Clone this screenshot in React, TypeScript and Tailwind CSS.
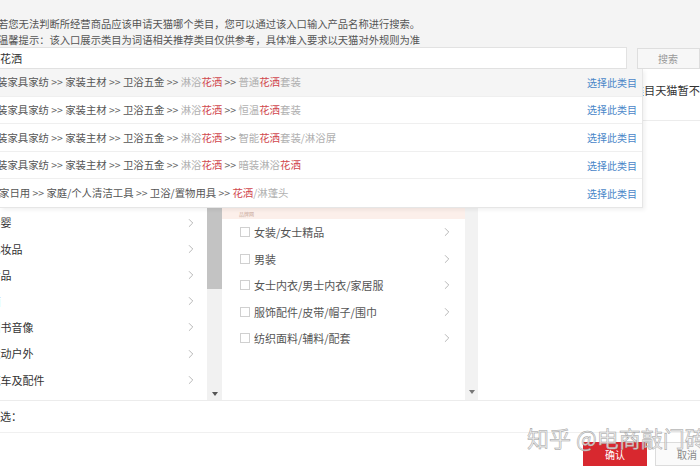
import React from "react";
import { ChevronRight } from "lucide-react";

type Seg = { t: string; c?: "d" | "l" | "r" | "s" };

const S: Seg = { t: " >> ", c: "s" };

const dropRows: Seg[][] = [
  [{ t: "装家具家纺" }, S, { t: "家装主材" }, S, { t: "卫浴五金" }, S, { t: "淋浴", c: "l" }, { t: "花洒", c: "r" }, S, { t: "普通", c: "l" }, { t: "花洒", c: "r" }, { t: "套装", c: "l" }],
  [{ t: "装家具家纺" }, S, { t: "家装主材" }, S, { t: "卫浴五金" }, S, { t: "淋浴", c: "l" }, { t: "花洒", c: "r" }, S, { t: "恒温", c: "l" }, { t: "花洒", c: "r" }, { t: "套装", c: "l" }],
  [{ t: "装家具家纺" }, S, { t: "家装主材" }, S, { t: "卫浴五金" }, S, { t: "淋浴", c: "l" }, { t: "花洒", c: "r" }, S, { t: "智能", c: "l" }, { t: "花洒", c: "r" }, { t: "套装/淋浴屏", c: "l" }],
  [{ t: "装家具家纺" }, S, { t: "家装主材" }, S, { t: "卫浴五金" }, S, { t: "淋浴", c: "l" }, { t: "花洒", c: "r" }, S, { t: "暗装淋浴", c: "l" }, { t: "花洒", c: "r" }],
  [{ t: "家日用" }, S, { t: "家庭/个人清洁工具" }, S, { t: "卫浴/置物用具" }, S, { t: "花洒", c: "r" }, { t: "/淋蓬头", c: "l" }],
];

const segCls = (c?: string) =>
  c === "l" ? "text-[#b0b0b0]" : c === "r" ? "text-[#d0474d]" : c === "s" ? "text-[#666]" : "text-[#555]";

const leftItems = ["女装", "男装", "鞋靴", "母婴", "化妆品", "食品", "酒", "图书音像", "运动户外", "汽车及配件", "家装主材"];
const midItems = ["女装/女士精品", "男装", "女士内衣/男士内衣/家居服", "服饰配件/皮带/帽子/围巾", "纺织面料/辅料/配套"];

export default function App() {
  return (
    <div
      className="relative w-[700px] h-[470px] overflow-hidden bg-white text-[#333]"
      style={{ fontFamily: '"Noto Sans CJK SC", "Noto Sans", sans-serif' }}
    >
      {/* top notice */}
      <div className="h-[47px] bg-[#f4f4f4] pt-[16px] text-[10.3px] leading-[16px] text-[#555] whitespace-nowrap">
        <div className="-ml-[2px]">若您无法判断所经营商品应该申请天猫哪个类目，您可以通过该入口输入产品名称进行搜索。</div>
        <div className="-ml-[2px]">温馨提示：该入口展示类目为词语相关推荐类目仅供参考，具体准入要求以天猫对外规则为准</div>
      </div>

      {/* search row */}
      <div className="flex h-[22px] bg-[#f4f4f4]">
        <div className="w-[645px] h-[22px] bg-white border border-[#e2e2e2] flex items-center text-[11px] text-[#333] -ml-[1px]">
          花洒
        </div>
        <div className="ml-[10px] w-[64px] h-[21px] mt-[1px] border border-[#dedede] bg-[#f7f7f7] flex items-center pl-[20px] text-[10px] text-[#999]">
          搜索
        </div>
      </div>

      {/* notice under search */}
      <div className="h-[51px] pt-[13px] text-[11.2px] leading-[16px] whitespace-nowrap pl-[588px] text-[#333]">
        您选择的类目天猫暂不开放入驻
      </div>

      {/* panels */}
      <div className="flex h-[280px] border-t border-[#ececec]">
        {/* left column */}
        <div className="w-[207px] overflow-hidden pt-[10px]">
          {leftItems.map((t) => (
            <div key={t} className="h-[26.2px] flex items-center justify-between pr-[9px] text-[11px] text-[#333] whitespace-nowrap">
              <span className="-ml-[10.5px]">{t}</span>
              <ChevronRight size={14} strokeWidth={1.2} color="#999" />
            </div>
          ))}
        </div>
        {/* scrollbar */}
        <div className="w-[15px] bg-[#f1f1f1] flex flex-col justify-between pt-[2px] pb-[4px] items-center">
          <div className="w-[15px] h-[166px] bg-[#c3c3c3]" />
          <div className="w-0 h-0 border-l-[3px] border-r-[3px] border-t-[4px] border-l-transparent border-r-transparent border-t-[#555]" />
        </div>
        {/* middle column */}
        <div className="w-[243px]">
          <div className="h-[98px] bg-[#fcefea] flex items-end pl-[17px] pb-[2px]">
            <span className="text-[5px] leading-[6px] text-[#c9a99a]">品牌网</span>
          </div>
          {midItems.map((t) => (
            <div key={t} className="h-[26.5px] flex items-center justify-between pl-[18px] pr-[11px] whitespace-nowrap">
              <div className="flex items-center">
                <div className="w-[10px] h-[10px] border border-[#d0d0d0] bg-white" />
                <span className="ml-[4px] text-[11px] text-[#555]">{t}</span>
              </div>
              <ChevronRight size={14} strokeWidth={1.2} color="#999" />
            </div>
          ))}
        </div>
        <div className="w-[13px] bg-[#f2f2f2] flex flex-col justify-end items-center pb-[6px]">
          <div className="w-0 h-0 border-l-[3px] border-r-[3px] border-t-[4px] border-l-transparent border-r-transparent border-t-[#777]" />
        </div>
        <div className="flex-1 bg-white" />
      </div>

      {/* selected row */}
      <div className="h-[32px] border-t border-[#ececec] flex items-center text-[11px] text-[#333] whitespace-nowrap">
        <span className="-ml-[11px]">已选：</span>
      </div>

      {/* footer */}
      <div className="border-t border-[#f0f0f0] pt-[9px] pl-[583px] flex gap-[8px]">
        <div className="w-[64px] h-[24px] bg-[#d8282f] text-white text-[10px] flex items-center justify-center shrink-0">
          确认
        </div>
        <div className="w-[64px] h-[24px] bg-[#fafafa] border border-[#dcdcdc] text-[#888] text-[10px] flex items-center justify-center shrink-0">
          取消
        </div>
      </div>

      {/* watermark */}
      <div className="absolute left-[527px] top-[424px] text-[22px] leading-[26px] whitespace-nowrap text-[rgba(238,238,238,0.85)] [-webkit-text-stroke:0.5px_#a0a0a0]">
        知乎 @电商敲门砖
      </div>

      {/* dropdown overlay */}
      <div className="absolute left-0 top-[69px] w-[643px] bg-white border-r border-b border-[#e6e6e6] shadow-[2px_2px_4px_rgba(0,0,0,0.06)]">
        {dropRows.map((segs, i) => (
          <div
            key={i}
            className={`h-[27.6px] flex items-center justify-between pr-[5px] whitespace-nowrap text-[10.4px] ${
              i === 0 ? "bg-[#f5f5f5]" : "bg-white"
            } ${i < dropRows.length - 1 ? "border-b border-[#efefef]" : ""}`}
          >
            <span className={i === 4 ? "-ml-[1px]" : "-ml-[3px]"}>
              {segs.map((s, j) => (
                <span key={j} className={`${segCls(s.c)} whitespace-pre`}>
                  {s.t}
                </span>
              ))}
            </span>
            <span className="text-[10px] text-[#4a86c8]">选择此类目</span>
          </div>
        ))}
      </div>
    </div>
  );
}
